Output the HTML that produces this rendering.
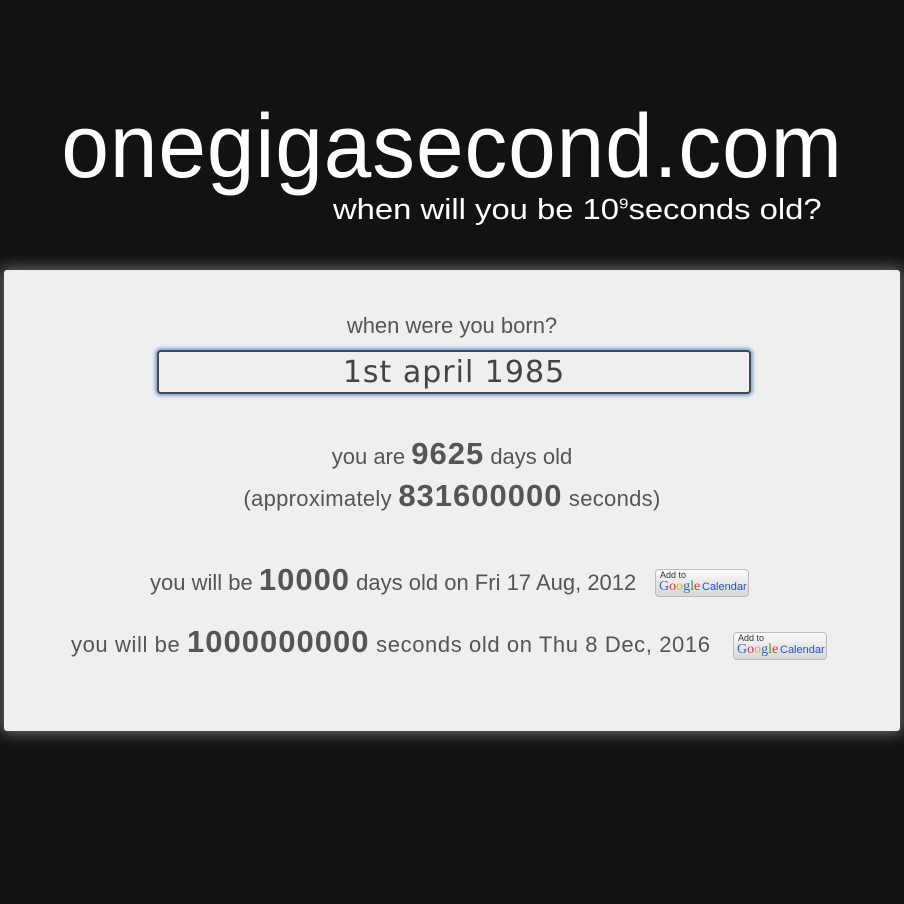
<!DOCTYPE html>
<html><head><style>
body{margin:0;width:904px;height:904px;background:#121212;font-family:"Liberation Sans",sans-serif;position:relative;overflow:hidden}
.t{position:absolute;left:0;width:904px;text-align:center;color:#fff;white-space:nowrap}
.panel{position:absolute;left:4px;top:270px;width:896px;height:461px;background:#efefef;border-radius:3px;box-shadow:0 0 14px 3px rgba(255,255,255,.35)}
.c{position:absolute;left:0;width:904px;text-align:center;color:#555;white-space:nowrap;font-size:22px}
b{font-size:31px;font-weight:bold;letter-spacing:1px}
.inp{position:absolute;left:157px;top:350px;width:590px;height:40px;border:2px solid #4a4a4a;border-radius:4px;box-shadow:0 0 3px 2px #7aa4dc;background:#efefef;text-align:center;font:30px "DejaVu Sans",sans-serif;color:#444;line-height:42px;letter-spacing:1px}
.gc{position:absolute;width:92px;height:26px;border:1px solid #bbb;border-radius:4px;background:linear-gradient(#fafafa,#d8d8d8);font-size:9px;color:#333}
.gc span{position:absolute;left:4px;top:0}
.gc i{position:absolute;left:3px;top:9px;font-style:normal;font-family:"Liberation Serif",serif;font-size:14px;color:#3366cc}
.gc em{position:absolute;left:46px;top:11px;font-style:normal;font-size:11px;color:#2255bb}
</style></head><body>
<div class="t" style="top:96px;font-size:90px;letter-spacing:1px;transform:scaleX(0.95);transform-origin:453px 0">onegigasecond.com</div>
<div class="t" style="top:194px;left:333px;width:auto;text-align:left;font-size:29px;transform:scaleX(1.13);transform-origin:0 0">when will you be 10<sup style="font-size:15px">9</sup>seconds old?</div>
<div class="panel"></div>
<div class="c" style="top:313px">when were you born?</div>
<div class="inp">1st april 1985</div>
<div class="c" style="top:436px">you are <b>9625</b> days old</div>
<div class="c" style="top:478px;letter-spacing:0.3px">(approximately <b>831600000</b> seconds)</div>
<div class="c" style="top:562px;left:150px;width:auto">you will be <b>10000</b> days old on Fri 17 Aug, 2012</div>
<div class="gc" style="left:655px;top:569px"><span>Add to</span><i><span style="color:#3366cc;position:static">G</span><span style="color:#d33;position:static">o</span><span style="color:#e9b000;position:static">o</span><span style="color:#3366cc;position:static">g</span><span style="color:#393;position:static">l</span><span style="color:#d33;position:static">e</span></i><em>Calendar</em></div>
<div class="c" style="top:624px;left:71px;width:auto;letter-spacing:0.6px">you will be <b>1000000000</b> seconds old on Thu 8 Dec, 2016</div>
<div class="gc" style="left:733px;top:632px"><span>Add to</span><i><span style="color:#3366cc;position:static">G</span><span style="color:#d33;position:static">o</span><span style="color:#e9b000;position:static">o</span><span style="color:#3366cc;position:static">g</span><span style="color:#393;position:static">l</span><span style="color:#d33;position:static">e</span></i><em>Calendar</em></div>
</body></html>
